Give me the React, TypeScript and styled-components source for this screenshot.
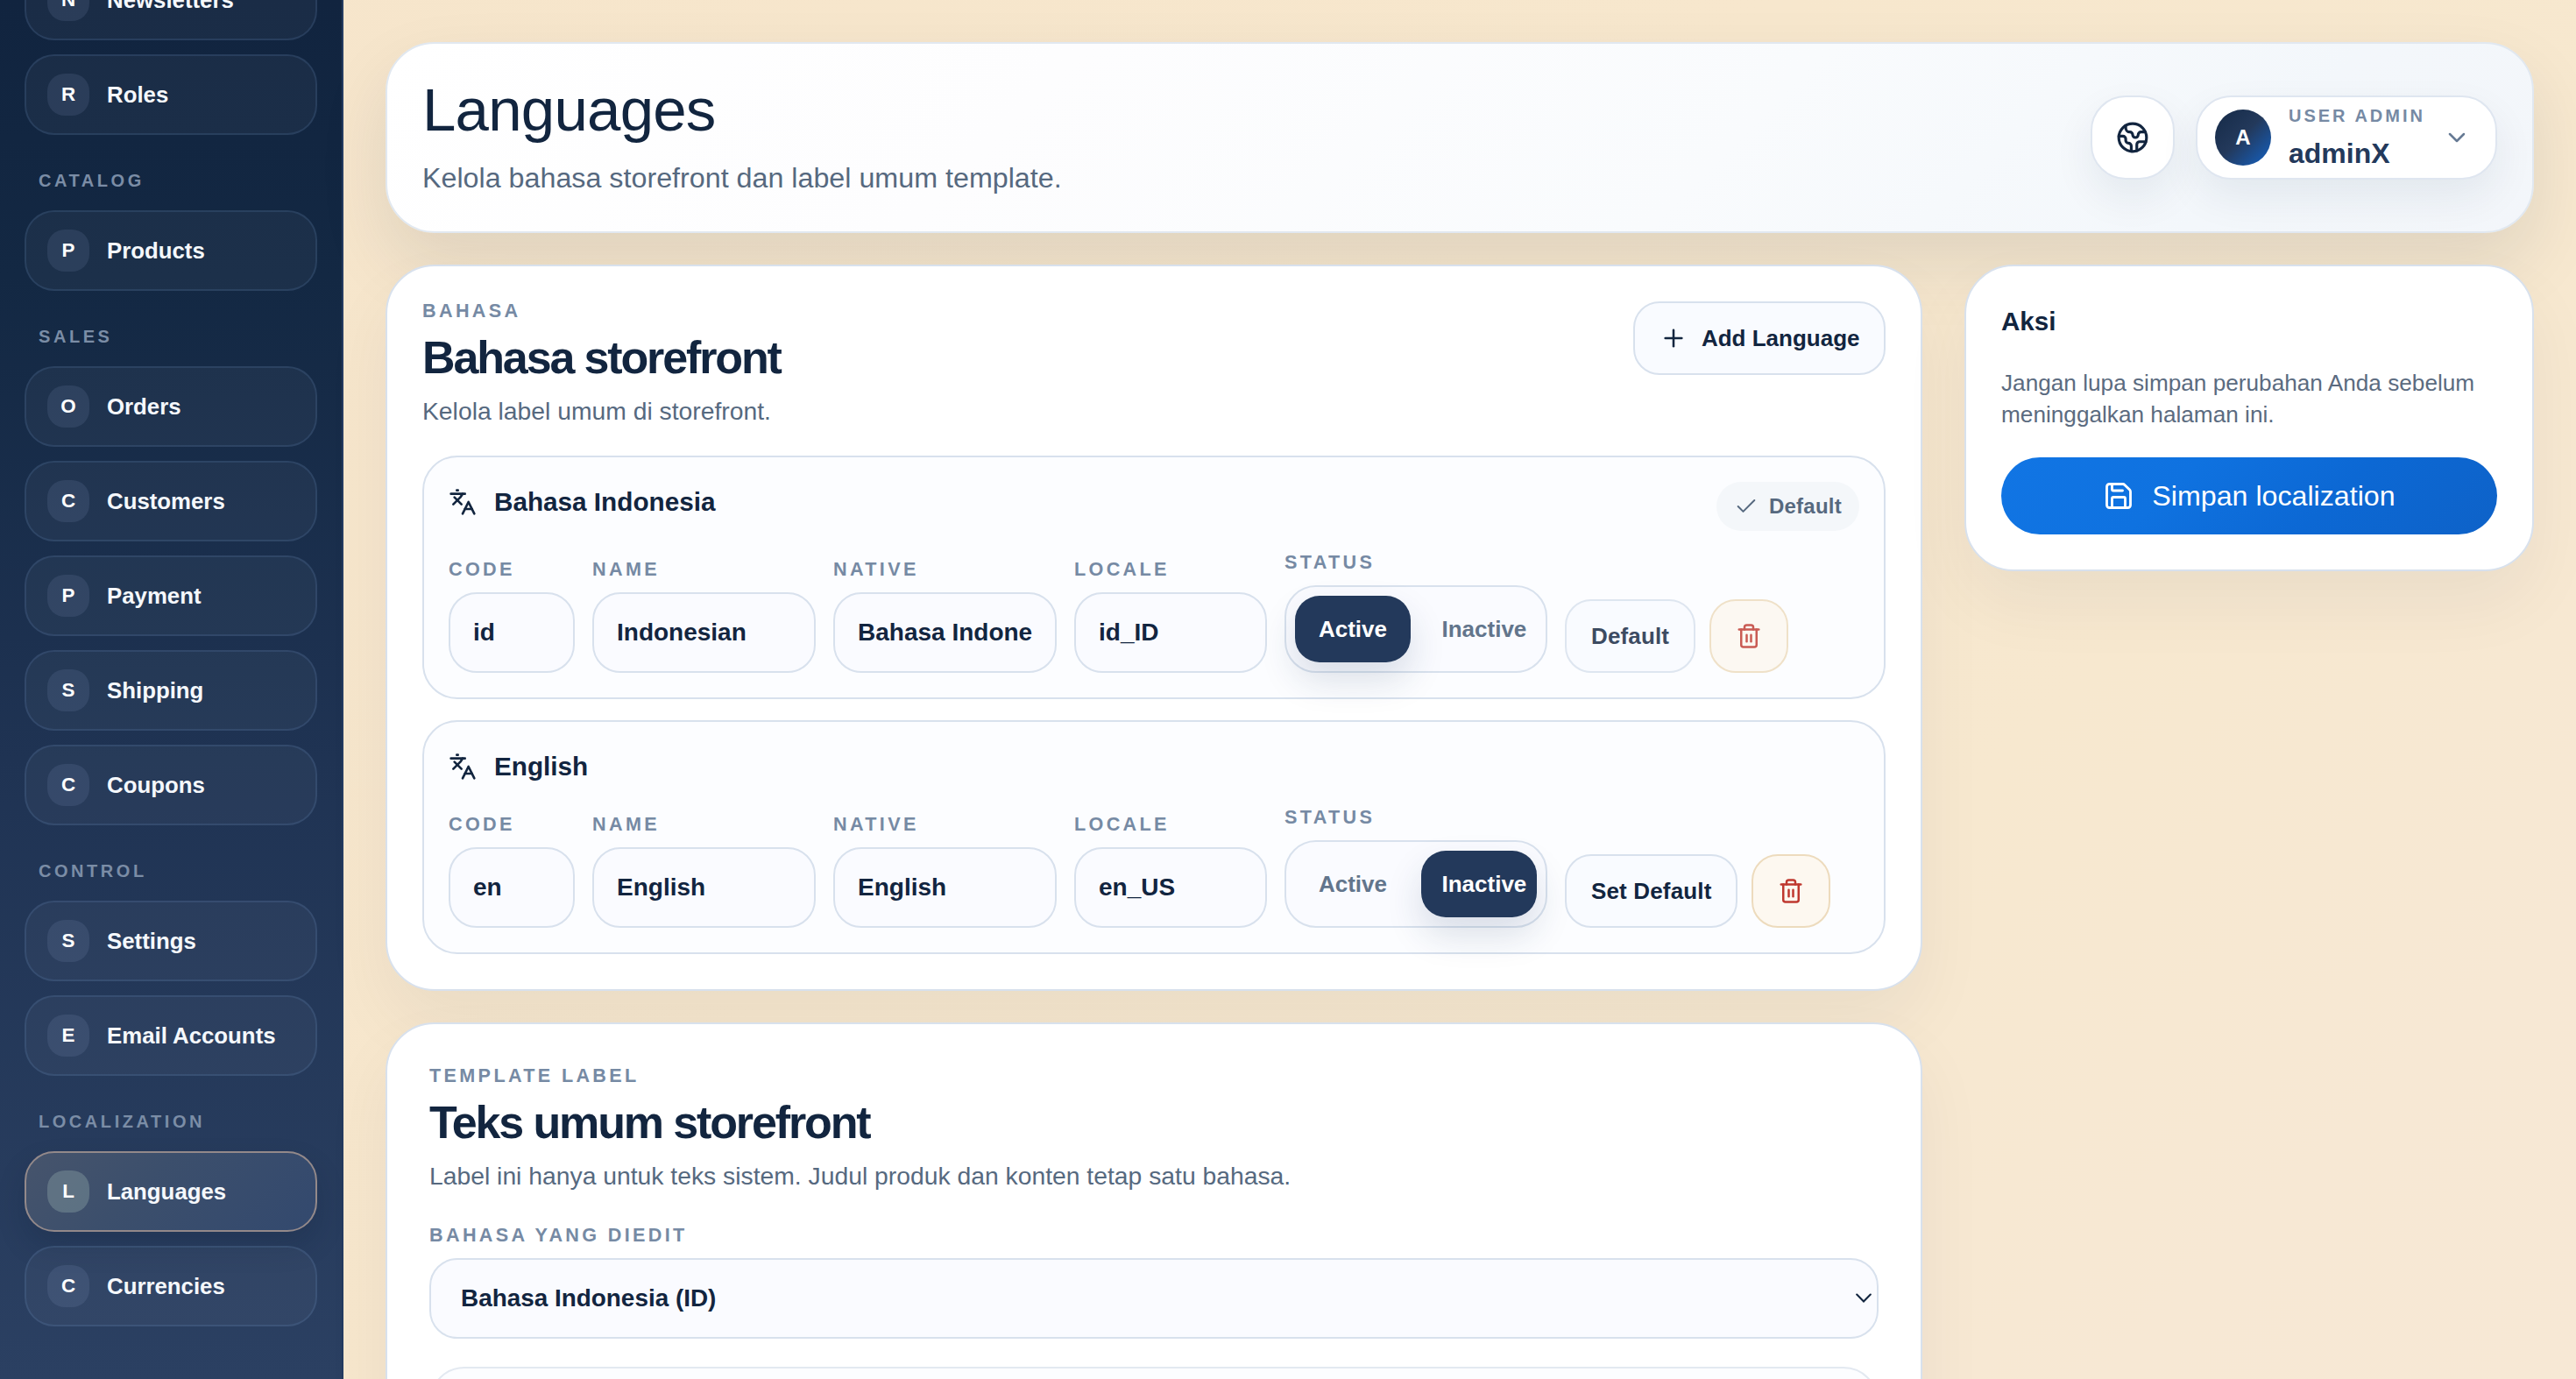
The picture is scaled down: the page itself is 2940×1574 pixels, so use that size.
import React from "react";
import styled, { createGlobalStyle, css } from "styled-components";
import { Check, ChevronDown, Earth, Languages as LanguagesIcon, Plus, Save, Trash2 } from "lucide-react";

const ink = "#12253f";
const navy = "#23395b";
const muted = "#56697f";
const soft = "#768aa4";
const line = "#d8e1ed";

const GlobalStyle = createGlobalStyle`
  *, *::before, *::after { box-sizing: border-box; }
  html, body { margin: 0; padding: 0; height: 100%; overflow: hidden; }
  body {
    font-family: "Liberation Sans", Arial, sans-serif;
    color: ${ink};
    background: linear-gradient(135deg, #f6e5cb 0%, #f7e7cd 45%, #f7e8cf 70%, #f7e8d4 88%, #f7e8d5 100%);
  }
  h1, h2, h3, p { margin: 0; }
  button, input { font-family: inherit; margin: 0; }
  svg { display: block; flex: none; }
`;

/* ---------- Shell ---------- */

const Shell = styled.div`
  display: flex;
  height: 1574px;
  overflow: hidden;
`;

const Sidebar = styled.aside`
  width: 392px;
  flex: none;
  padding: 0 28px;
  border-right: 2px solid #243b60;
  background: linear-gradient(180deg, #11243f 0%, #132843 20%, #1f3353 55%, #2b4062 100%);
  overflow: hidden;
`;

const Nav = styled.nav`
  margin-top: -46px;
`;

const NavLabel = styled.div`
  margin: 40px 0 22px;
  padding-left: 16px;
  font-size: 20px;
  font-weight: 700;
  line-height: 24px;
  letter-spacing: 3.55px;
  text-transform: uppercase;
  color: #7b8da6;
`;

const NavList = styled.div`
  display: flex;
  flex-direction: column;
  gap: 16px;
  width: 334px;
`;

const NavInitial = styled.span<{ $active?: boolean }>`
  display: grid;
  place-items: center;
  width: 48px;
  height: 48px;
  border-radius: 20px;
  font-size: 22.4px;
  line-height: 1;
  letter-spacing: 0;
  color: #fff;
  background: ${(p) => (p.$active ? "rgba(160, 185, 180, 0.32)" : "rgba(170, 195, 235, 0.11)")};
`;

const NavItem = styled.a<{ $active?: boolean }>`
  display: flex;
  align-items: center;
  gap: 20px;
  height: 92px;
  padding: 0 24px;
  border: 2px solid rgba(130, 170, 230, 0.14);
  border-radius: 34px;
  background: rgba(255, 255, 255, 0.04);
  color: #f5f8fc;
  font-size: 25.8px;
  font-weight: 700;
  white-space: nowrap;
  ${(p) =>
    p.$active &&
    css`
      border-color: #93898a;
      background: linear-gradient(135deg, #46546c 0%, #3c4f6c 40%, #33496e 100%);
      box-shadow: 0 16px 32px rgba(12, 28, 52, 0.18);
    `}
`;

const Main = styled.main`
  flex: 1;
  padding: 48px;
  min-width: 0;
`;

/* ---------- Header ---------- */

const PageHeader = styled.header`
  display: flex;
  align-items: center;
  justify-content: space-between;
  height: 218px;
  padding: 0 40px;
  border: 2px solid #e1e8f0;
  border-radius: 56px;
  background: linear-gradient(135deg, #ffffff 0%, #fdfdfe 30%, #f9fbfd 62%, #f3f7fb 85%, #f3f6fa 100%);
  box-shadow: 0 36px 80px rgba(18, 37, 64, 0.1);
`;

const PageTitle = styled.h1`
  padding-top: 2px;
  font-size: 69px;
  font-weight: 400;
  line-height: 76px;
  letter-spacing: -0.77px;
`;

const PageLead = styled.p`
  margin-top: 13px;
  font-size: 32.25px;
  line-height: 52px;
  color: ${muted};
`;

const HeaderTools = styled.div`
  display: flex;
  gap: 24px;
`;

const toolSurface = css`
  height: 96px;
  border: 2px solid #dfe6f0;
  border-radius: 40px;
  background: #fff;
  color: ${ink};
  box-shadow: 0 20px 48px rgba(18, 37, 64, 0.07);
`;

const GlobeButton = styled.button`
  ${toolSurface}
  display: grid;
  place-items: center;
  width: 96px;
  padding: 0;
`;

const UserMenu = styled.button`
  ${toolSurface}
  display: flex;
  align-items: center;
  gap: 20px;
  width: 344px;
  padding: 0 29px 0 20px;
  text-align: left;

  svg {
    margin-left: auto;
    color: #667a94;
  }
`;

const Avatar = styled.span`
  display: grid;
  place-items: center;
  width: 64px;
  height: 64px;
  border-radius: 50%;
  flex: none;
  background: linear-gradient(135deg, #152a47 0%, #23395b 48%, #1462c4 100%);
  color: #fff;
  font-size: 24px;
  font-weight: 700;
`;

const UserText = styled.span`
  display: flex;
  flex-direction: column;
`;

const UserRole = styled.span`
  font-size: 20px;
  font-weight: 700;
  line-height: 36px;
  letter-spacing: 3px;
  color: ${soft};
  white-space: nowrap;
`;

const UserName = styled.span`
  font-size: 32px;
  font-weight: 700;
  line-height: 50px;
  color: ${navy};
`;

/* ---------- Content ---------- */

const Columns = styled.div`
  display: grid;
  grid-template-columns: 1754px 650px;
  gap: 48px;
  align-items: start;
  margin-top: 36px;
`;

const Stack = styled.div`
  display: flex;
  flex-direction: column;
  gap: 36px;
`;

const Card = styled.section<{ $pad?: number }>`
  padding: ${(p) => p.$pad ?? 40}px;
  border: 2px solid ${line};
  border-radius: 56px;
  background: #fff;
  box-shadow: 0 36px 80px rgba(18, 37, 64, 0.055);
`;

const SectionHead = styled.div`
  display: flex;
  justify-content: space-between;
  align-items: flex-start;
  margin-bottom: 29px;
`;

const Eyebrow = styled.p`
  font-size: 21.6px;
  font-weight: 700;
  line-height: 22px;
  letter-spacing: 0.155em;
  color: ${soft};
`;

const SectionTitle = styled.h2`
  margin-top: 12px;
  font-size: 52px;
  font-weight: 700;
  line-height: 60px;
  letter-spacing: -0.041em;
`;

const SectionText = styled.p`
  margin-top: 9px;
  font-size: 28.3px;
  line-height: 44px;
  color: ${muted};
`;

const Button = styled.button<{ $muted?: boolean }>`
  display: inline-flex;
  align-items: center;
  gap: 16px;
  height: 84px;
  padding: 0 28px;
  border: 2px solid ${line};
  border-radius: 30px;
  background: #f9fbff;
  color: ${ink};
  font-size: 26px;
  font-weight: 700;
  letter-spacing: 0.15px;
  white-space: nowrap;
  opacity: ${(p) => (p.$muted ? 0.82 : 1)};
`;

const AddButton = styled(Button)`
  padding: 0 27.5px;
  letter-spacing: 0;
`;

const DeleteButton = styled(Button)`
  border-color: #eddbbd;
  background: #fdf8f0;
  color: #bf382f;
`;

const LanguageList = styled.div`
  display: flex;
  flex-direction: column;
  gap: 24px;
`;

const LanguageCard = styled.article`
  padding: 28px;
  border: 2px solid ${line};
  border-radius: 40px;
  background: #fcfdff;
`;

const LanguageHead = styled.div`
  display: flex;
  justify-content: space-between;
  align-items: flex-start;
  margin-bottom: 19px;
`;

const LanguageName = styled.h3`
  display: flex;
  align-items: center;
  gap: 20px;
  height: 45px;
  font-size: 29.7px;
  font-weight: 700;
`;

const DefaultBadge = styled.span`
  display: inline-flex;
  align-items: center;
  gap: 12px;
  height: 56px;
  padding: 0 20px;
  border-radius: 28px;
  background: #f4f7fa;
  color: ${muted};
  font-size: 24px;
  font-weight: 700;
  letter-spacing: 0.25px;
`;

const FieldRow = styled.div`
  display: grid;
  grid-template-columns: 144px 255px 255px 220px 300px 1fr;
  gap: 20px;
  align-items: end;
`;

const Field = styled.label`
  display: flex;
  flex-direction: column;
  gap: 10px;
  min-width: 0;
`;

const FieldLabel = styled.span`
  font-size: 21.6px;
  font-weight: 700;
  line-height: 33px;
  letter-spacing: 0.155em;
  color: ${soft};
  white-space: nowrap;
`;

const TextInput = styled.input`
  width: 100%;
  height: 92px;
  padding: 0 25px 0 26px;
  border: 2px solid ${line};
  border-radius: 32px;
  outline: none;
  background: #fafbff;
  color: ${ink};
  font-size: 28px;
  font-weight: 700;
`;

const Segmented = styled.div`
  display: grid;
  grid-template-columns: 132px 132px;
  gap: 12px;
  height: 100px;
  padding: 10px;
  border: 2px solid ${line};
  border-radius: 36px;
  background: #fafbff;
`;

const Segment = styled.span<{ $on: boolean }>`
  height: 76px;
  padding: 0 23.5px;
  border-radius: 28px;
  font-size: 26px;
  font-weight: 700;
  line-height: 76px;
  text-align: center;
  white-space: nowrap;
  color: ${(p) => (p.$on ? "#fff" : "#62758c")};
  background: ${(p) => (p.$on ? navy : "transparent")};
  box-shadow: ${(p) => (p.$on ? "0 20px 40px rgba(30, 55, 95, 0.15)" : "none")};
`;

const RowActions = styled.div`
  display: flex;
  gap: 16px;
`;

const SelectBox = styled.button`
  display: flex;
  align-items: center;
  justify-content: space-between;
  height: 92px;
  padding: 0 6px 0 34px;
  border: 2px solid ${line};
  border-radius: 32px;
  background: #fafbff;
  color: ${ink};
  font-size: 27.9px;
  font-weight: 700;
  text-align: left;
`;

const LabelPanel = styled.div`
  height: 320px;
  margin-top: 32px;
  border: 2px solid #e3e9f1;
  border-radius: 40px;
  background: #fcfdff;
`;

const AsideTitle = styled.h3`
  font-size: 29.6px;
  font-weight: 700;
  line-height: 45px;
`;

const AsideText = styled.p`
  margin: 30px 0 31px;
  font-size: 26.2px;
  line-height: 36px;
  color: #5b6b80;
`;

const SaveButton = styled.button`
  display: flex;
  align-items: center;
  justify-content: center;
  gap: 20px;
  width: 100%;
  height: 88px;
  border: 0;
  border-radius: 44px;
  background: linear-gradient(135deg, #1175e4 0%, #0f72e0 35%, #0c68d4 65%, #0e62c8 100%);
  color: #fff;
  font-size: 32.2px;
`;

type NavGroup = { label?: string; items: string[] };

const navGroups: NavGroup[] = [
  { items: ["Newsletters", "Roles"] },
  { label: "Catalog", items: ["Products"] },
  { label: "Sales", items: ["Orders", "Customers", "Payment", "Shipping", "Coupons"] },
  { label: "Control", items: ["Settings", "Email Accounts"] },
  { label: "Localization", items: ["Languages", "Currencies"] },
];

type Language = {
  title: string;
  code: string;
  name: string;
  native: string;
  locale: string;
  active: boolean;
  isDefault: boolean;
};

const languages: Language[] = [
  {
    title: "Bahasa Indonesia",
    code: "id",
    name: "Indonesian",
    native: "Bahasa Indonesia",
    locale: "id_ID",
    active: true,
    isDefault: true,
  },
  {
    title: "English",
    code: "en",
    name: "English",
    native: "English",
    locale: "en_US",
    active: false,
    isDefault: false,
  },
];

function InputField({ label, value }: { label: string; value: string }) {
  return (
    <Field>
      <FieldLabel>{label}</FieldLabel>
      <TextInput defaultValue={value} />
    </Field>
  );
}

function LanguageEditor({ lang }: { lang: Language }) {
  return (
    <LanguageCard>
      <LanguageHead>
        <LanguageName>
          <LanguagesIcon size={32} strokeWidth={2} />
          {lang.title}
        </LanguageName>
        {lang.isDefault && (
          <DefaultBadge>
            <Check size={28} strokeWidth={1.7} />
            Default
          </DefaultBadge>
        )}
      </LanguageHead>
      <FieldRow>
        <InputField label="CODE" value={lang.code} />
        <InputField label="NAME" value={lang.name} />
        <InputField label="NATIVE" value={lang.native} />
        <InputField label="LOCALE" value={lang.locale} />
        <Field as="div">
          <FieldLabel>STATUS</FieldLabel>
          <Segmented>
            <Segment $on={lang.active}>Active</Segment>
            <Segment $on={!lang.active}>Inactive</Segment>
          </Segmented>
        </Field>
        <RowActions>
          <Button $muted={lang.isDefault}>{lang.isDefault ? "Default" : "Set Default"}</Button>
          <DeleteButton $muted={lang.isDefault} aria-label="Delete">
            <Trash2 size={30} strokeWidth={2} />
          </DeleteButton>
        </RowActions>
      </FieldRow>
    </LanguageCard>
  );
}

export default function App() {
  return (
    <>
      <GlobalStyle />
      <Shell>
        <Sidebar>
          <Nav>
            {navGroups.map((group, i) => (
              <React.Fragment key={i}>
                {group.label && <NavLabel>{group.label}</NavLabel>}
                <NavList>
                  {group.items.map((item) => {
                    const active = item === "Languages";
                    return (
                      <NavItem key={item} $active={active}>
                        <NavInitial $active={active}>{item[0]}</NavInitial>
                        {item}
                      </NavItem>
                    );
                  })}
                </NavList>
              </React.Fragment>
            ))}
          </Nav>
        </Sidebar>

        <Main>
          <PageHeader>
            <div>
              <PageTitle>Languages</PageTitle>
              <PageLead>Kelola bahasa storefront dan label umum template.</PageLead>
            </div>
            <HeaderTools>
              <GlobeButton aria-label="Language">
                <Earth size={38} strokeWidth={2} />
              </GlobeButton>
              <UserMenu>
                <Avatar>A</Avatar>
                <UserText>
                  <UserRole>USER ADMIN</UserRole>
                  <UserName>adminX</UserName>
                </UserText>
                <ChevronDown size={32} strokeWidth={1.9} />
              </UserMenu>
            </HeaderTools>
          </PageHeader>

          <Columns>
            <Stack>
              <Card>
                <SectionHead>
                  <div>
                    <Eyebrow>BAHASA</Eyebrow>
                    <SectionTitle>Bahasa storefront</SectionTitle>
                    <SectionText>Kelola label umum di storefront.</SectionText>
                  </div>
                  <AddButton>
                    <Plus size={32} strokeWidth={1.9} />
                    Add Language
                  </AddButton>
                </SectionHead>
                <LanguageList>
                  {languages.map((lang) => (
                    <LanguageEditor key={lang.code} lang={lang} />
                  ))}
                </LanguageList>
              </Card>

              <Card $pad={48}>
                <SectionHead>
                  <div>
                    <Eyebrow>TEMPLATE LABEL</Eyebrow>
                    <SectionTitle>Teks umum storefront</SectionTitle>
                    <SectionText>
                      Label ini hanya untuk teks sistem. Judul produk dan konten tetap satu bahasa.
                    </SectionText>
                  </div>
                </SectionHead>
                <Field as="div">
                  <FieldLabel>BAHASA YANG DIEDIT</FieldLabel>
                  <SelectBox>
                    Bahasa Indonesia (ID)
                    <svg width="18" height="12" viewBox="0 0 18 12" fill="none">
                      <path d="M1.2 1.6 9 9.4l7.8-7.8" stroke={ink} strokeWidth="2.1" strokeLinecap="round" />
                    </svg>
                  </SelectBox>
                </Field>
                <LabelPanel />
              </Card>
            </Stack>

            <Card as="aside">
              <AsideTitle>Aksi</AsideTitle>
              <AsideText>Jangan lupa simpan perubahan Anda sebelum meninggalkan halaman ini.</AsideText>
              <SaveButton>
                <Save size={36} strokeWidth={1.9} />
                Simpan localization
              </SaveButton>
            </Card>
          </Columns>
        </Main>
      </Shell>
    </>
  );
}
